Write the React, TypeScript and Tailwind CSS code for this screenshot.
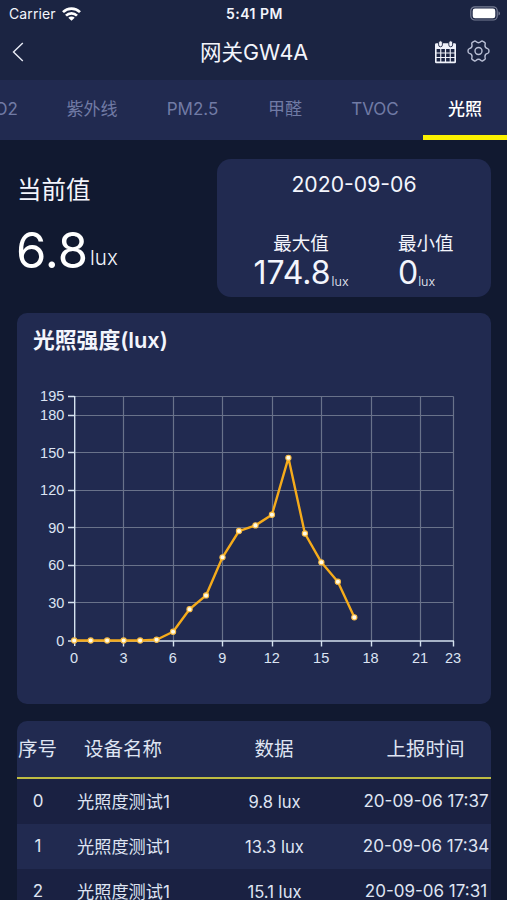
import { clsx } from 'clsx';

const tabs = [
  { label: 'CO2', width: 'w-[84px]' },
  { label: '紫外线', width: 'w-[100px]' },
  { label: 'PM2.5', width: 'w-[101px]' },
  { label: '甲醛', width: 'w-[84px]' },
  { label: 'TVOC', width: 'w-[96px]' },
  { label: '光照', width: 'w-[84px]' },
];

const values = [0, 0, 0, 0, 0, 0.6, 7, 25, 36, 66.5, 87.5, 92, 100.5, 146, 85.5, 62.5, 47, 18.5];
const xTicks = [0, 3, 6, 9, 12, 15, 18, 21, 23];
const yTicks = [0, 30, 60, 90, 120, 150, 180, 195];

const rows = [
  { id: 0, name: '光照度测试1', value: '9.8 lux', time: '20-09-06 17:37' },
  { id: 1, name: '光照度测试1', value: '13.3 lux', time: '20-09-06 17:34' },
  { id: 2, name: '光照度测试1', value: '15.1 lux', time: '20-09-06 17:31' },
];

function StatusBar() {
  return (
    <div className="flex h-[27px] items-center justify-between pl-[9px] pr-[6px]">
      <div className="flex w-[119px] items-center gap-[6px]">
        <span className="text-[14px] tracking-[0.1px]">Carrier</span>
        <svg width="19" height="14" viewBox="0 0 19 14" fill="none" stroke="#fff" strokeWidth="2.7">
          <path d="M1 5.1a12.2 12.2 0 0 1 17 0" />
          <path d="M4 8.6a7.8 7.8 0 0 1 11 0" />
          <path d="M9.5 13.8 6.3 10.7a4.6 4.6 0 0 1 6.4 0z" fill="#fff" stroke="none" />
        </svg>
      </div>
      <span className="text-[14px] font-semibold tracking-[0.5px]">5:41 PM</span>
      <div className="flex w-[120px] justify-end">
        <svg width="31" height="15" viewBox="0 0 31 15">
          <rect x="0.8" y="0.8" width="26.4" height="13.2" rx="4" fill="none" stroke="#777d94" strokeWidth="1.2" />
          <rect x="2.7" y="2.6" width="22.6" height="9.6" rx="2.3" fill="#fff" />
          <path d="M28.5 5.2c2 .8 2 3.6 0 4.4z" fill="#777d94" />
        </svg>
      </div>
    </div>
  );
}

function NavBar() {
  return (
    <div className="flex h-[53px] items-center justify-between pl-[12px] pr-[17px] pb-[3px]">
      <div className="w-[66px]">
        <svg width="12" height="20" viewBox="0 0 12 20" fill="none" stroke="#e8ebf5" strokeWidth="1.4">
          <path d="M10.8 1 1.5 10l9.3 9" />
        </svg>
      </div>
      <h1 className="text-[21.5px] leading-6">网关GW4A</h1>
      <div className="flex w-[60px] items-center justify-end gap-[10px]">
        <svg width="23" height="24" viewBox="0 0 23 24">
          <path
            fillRule="evenodd"
            fill="#f0f2fa"
            d="M2.4 3.2H20.6Q22 3.2 22 4.6V22Q22 23.3 20.6 23.3H2.4Q1 23.3 1 22V4.6Q1 3.2 2.4 3.2z M2.6 9h3.6v3.4H2.6z M7.3 9h3.6v3.4H7.3z M12.1 9h3.6v3.4h-3.6z M16.8 9h3.6v3.4h-3.6z M2.6 13.5h3.6v3.4H2.6z M7.3 13.5h3.6v3.4H7.3z M12.1 13.5h3.6v3.4h-3.6z M16.8 13.5h3.6v3.4h-3.6z M2.6 18h3.6v3.5H2.6z M7.3 18h3.6v3.5H7.3z M12.1 18h3.6v3.5h-3.6z M16.8 18h3.6v3.5h-3.6z"
          />
          <rect x="4.6" y="0.8" width="3.8" height="6" rx="1.9" fill="#f0f2fa" stroke="#1b2442" strokeWidth="0.9" />
          <rect x="14.8" y="0.8" width="3.8" height="6" rx="1.9" fill="#f0f2fa" stroke="#1b2442" strokeWidth="0.9" />
        </svg>
        <svg
          width="23"
          height="22"
          viewBox="0 0 23 22"
          fill="none"
          stroke="#b9bfd5"
          strokeWidth="1.4"
          strokeLinejoin="round"
          className="mb-[3px]"
        >
          <path d="M7 1.4Q8 .6 9 1.6 11.5 4 14 1.6 15 .6 16 1.4L17.6 2.4Q18.6 3 18.1 4.5 17.4 7.8 20.6 8.6 22 9 22 11 22 13 20.6 13.4 17.4 14.2 18.1 17.5 18.6 19 17.6 19.6L16 20.6Q15 21.4 14 20.4 11.5 18 9 20.4 8 21.4 7 20.6L5.4 19.6Q4.4 19 4.9 17.5 5.6 14.2 2.4 13.4 1 13 1 11 1 9 2.4 8.6 5.6 7.8 4.9 4.5 4.4 3 5.4 2.4z" />
          <circle cx="11.5" cy="11" r="3.5" />
        </svg>
      </div>
    </div>
  );
}

function Chart() {
  const x = (hour: number) => 74.5 + hour * 16.478;
  const y = (value: number) => 640.5 - value * 1.2513;
  const points = values.map((value, hour) => `${x(hour) - 0.3},${y(value)}`).join(' ');

  return (
    <svg
      width="474"
      height="334"
      viewBox="17 370 474 334"
      className="block font-['Liberation_Sans',sans-serif] text-[14.5px]"
    >
      <g stroke="#69728a" strokeWidth="1.2">
        {xTicks.slice(1).map((tick) => (
          <line key={tick} x1={Math.floor(x(tick)) + 0.5} x2={Math.floor(x(tick)) + 0.5} y1="396.5" y2="640.5" />
        ))}
        {yTicks.slice(1).map((tick) => (
          <line key={tick} x1="74.5" x2="453.5" y1={Math.floor(y(tick)) + 0.5} y2={Math.floor(y(tick)) + 0.5} />
        ))}
      </g>
      <g stroke="#d5e2ef" strokeWidth="1.4">
        <line x1="74.7" x2="74.7" y1="396" y2="646" />
        <line x1="68" x2="454" y1="641" y2="641" />
        {xTicks.slice(1).map((tick) => (
          <line key={tick} x1={Math.floor(x(tick)) + 0.5} x2={Math.floor(x(tick)) + 0.5} y1="641" y2="646.5" />
        ))}
        {yTicks.slice(1).map((tick) => (
          <line key={tick} x1="68" x2="74.5" y1={Math.floor(y(tick)) + 0.5} y2={Math.floor(y(tick)) + 0.5} />
        ))}
      </g>
      <g fill="#dce4f3">
        {xTicks.map((tick) => (
          <text key={tick} x={x(tick) - 0.5} y="662.5" textAnchor="middle">
            {tick}
          </text>
        ))}
        {yTicks.map((tick) => (
          <text key={tick} x="64.3" y={y(tick) + 5} textAnchor="end">
            {tick}
          </text>
        ))}
      </g>
      <polyline points={points} fill="none" stroke="#f5ab1b" strokeWidth="2.4" strokeLinejoin="round" />
      {values.map((value, hour) => (
        <circle key={hour} cx={x(hour) - 0.3} cy={y(value)} r="2.6" fill="#fffbe8" stroke="#f9bd45" strokeWidth="1.1" />
      ))}
    </svg>
  );
}

export default function App() {
  return (
    <div className="flex h-[900px] w-[507px] flex-col overflow-hidden bg-[#111930] font-[Inter,'Noto_Sans_CJK_SC',sans-serif] whitespace-nowrap text-[#f3f5fc]">
      <header className="h-[80px] shrink-0 bg-[#1b2442]">
        <StatusBar />
        <NavBar />
      </header>

      <nav className="flex h-[60px] shrink-0 justify-end overflow-hidden bg-[#212a50] text-[17px]">
        {tabs.map((tab) => (
          <div
            key={tab.label}
            className={clsx(
              'flex shrink-0 items-center justify-center border-b-[5px] pt-[5px]',
              tab.width,
              tab.label === '光照' ? 'border-[#fbf000] font-medium text-white' : 'border-transparent text-[#717ba5]',
            )}
          >
            {tab.label}
          </div>
        ))}
      </nav>

      <main className="pr-[16px] pl-[17px]">
        <section className="flex h-[173px] justify-between pt-[19px] pb-[16px]">
          <div>
            <div className="mt-[14px] text-[24.5px] leading-[34px]">当前值</div>
            <div className="mt-[16px] flex items-baseline leading-[56px]">
              <span className="-ml-[1px] text-[49px] text-white">6.8</span>
              <span className="relative -top-[3px] ml-[2px] text-[20.5px] font-light">lux</span>
            </div>
          </div>
          <div className="h-[138px] w-[274px] rounded-[14px] bg-[#212a50] pt-[11px]">
            <div className="text-center text-[21.2px] leading-[28px]">2020-09-06</div>
            <div className="mt-[32px] flex">
              <div className="w-[168px] text-center">
                <div className="text-[18.5px] leading-[26px]">最大值</div>
                <div className="flex items-baseline justify-center leading-[34px]">
                  <span className="text-[32px]">174.8</span>
                  <span className="relative top-[2px] ml-[1px] text-[12.5px] font-light">lux</span>
                </div>
              </div>
              <div className="pl-[13px]">
                <div className="text-[18.5px] leading-[26px]">最小值</div>
                <div className="flex items-baseline leading-[34px]">
                  <span className="text-[32px]">0</span>
                  <span className="relative top-[2px] text-[12.5px] font-light">lux</span>
                </div>
              </div>
            </div>
          </div>
        </section>

        <section className="h-[391px] overflow-hidden rounded-[10px] bg-[#212a50]">
          <h2 className="h-[57px] pt-[11px] pl-[16px] text-[21.8px] leading-[32px] font-semibold">光照强度(lux)</h2>
          <Chart />
        </section>

        <section className="mt-[17px] overflow-hidden rounded-t-[10px] bg-[#212a50]">
          <div className="flex h-[58px] items-center border-b-2 border-[#bfbc42] pt-[2px] text-[19.5px] text-[#dfe4f2]">
            <div className="w-[41px] text-center">序号</div>
            <div className="w-[130px] text-center">设备名称</div>
            <div className="w-[172px] text-center">数据</div>
            <div className="w-[131px] text-center">上报时间</div>
          </div>
          {rows.map((row) => (
            <div
              key={row.id}
              className={clsx(
                'flex h-[45px] items-center pt-[1px] text-[17px] text-[#dfe4f2]',
                row.id % 2 === 0 ? 'bg-[#1a2142]' : 'bg-[#212a50]',
              )}
            >
              <div className="w-[42px] text-center">{row.id}</div>
              <div className="w-[129px] text-center text-[17.2px]">{row.name}</div>
              <div className="w-[173px] text-center text-[16.6px]">{row.value}</div>
              <div className="w-[130px] text-center">{row.time}</div>
            </div>
          ))}
        </section>
      </main>
    </div>
  );
}
